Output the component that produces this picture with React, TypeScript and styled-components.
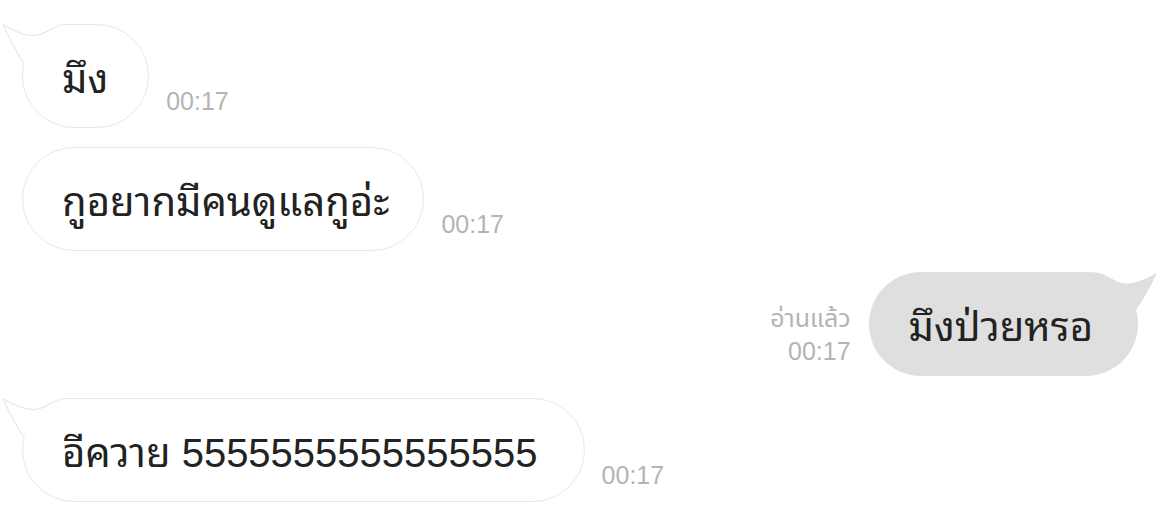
import React from "react";
import styled, { createGlobalStyle } from "styled-components";

const GlobalStyle = createGlobalStyle`
  html, body {
    margin: 0;
    padding: 0;
    background: #ffffff;
  }
  body {
    font-family: "Liberation Sans", "Noto Sans Thai Looped", "Loma", "Waree", "Noto Sans Thai", "Noto Sans", sans-serif;
  }
`;

const Chat = styled.div`
  width: 1170px;
  height: 530px;
  box-sizing: border-box;
  padding: 24px 32px 0 22px;
  display: flex;
  flex-direction: column;
  overflow: hidden;
`;

const Row = styled.div<{ $out?: boolean; $space: number }>`
  display: flex;
  align-items: flex-end;
  justify-content: ${(p) => (p.$out ? "flex-end" : "flex-start")};
  gap: ${(p) => (p.$out ? 18 : 17)}px;
  margin-top: ${(p) => p.$space}px;
`;

const Bubble = styled.div<{ $out?: boolean; $padRight: number }>`
  position: relative;
  box-sizing: border-box;
  height: 104px;
  padding: 0 ${(p) => p.$padRight}px 2px ${(p) => (p.$out ? 40 : 39)}px;
  border-radius: 52px;
  display: flex;
  align-items: center;
  font-family: "Liberation Sans", "Noto Sans Thai Looped", "Loma", "Waree", "Noto Sans Thai", "Noto Sans", sans-serif;
  font-size: 40px;
  color: #222222;
  white-space: nowrap;
  background: ${(p) => (p.$out ? "#dfdfdf" : "#ffffff")};
  border: ${(p) => (p.$out ? "none" : "1px solid #e8e8e8")};
`;

const TailSvg = styled.svg<{ $out?: boolean }>`
  position: absolute;
  top: ${(p) => (p.$out ? "0" : "-1px")};
  ${(p) => (p.$out ? "right: -22px;" : "left: -23px;")}
  transform: ${(p) => (p.$out ? "scaleX(-1)" : "none")};
  overflow: visible;
  pointer-events: none;
`;

const Time = styled.div`
  font-family: "Liberation Sans", "Noto Sans Thai", sans-serif;
  font-size: 25px;
  line-height: 32px;
  color: #b4b4b4;
  margin-bottom: 11px;
  white-space: nowrap;
`;

const Receipt = styled.div`
  display: flex;
  flex-direction: column;
  align-items: flex-end;
  font-family: "Liberation Sans", "Noto Sans Thai", sans-serif;
  font-size: 25px;
  line-height: 33px;
  color: #b4b4b4;
  margin-bottom: 8px;
`;

const Tail: React.FC<{ out?: boolean }> = ({ out }) => {
  const fill = out ? "#dfdfdf" : "#ffffff";
  return (
    <TailSvg $out={out} width={82} height={52} viewBox="0 0 82 52">
      <path
        d="M3 0.5 C15 8 28 13 38 11 C48 9 55 0.5 66 0.5 L82 0.5 L82 8 L34 52 L24 38 Q12 21 3 0.5 Z"
        fill={fill}
      />
      {!out && (
        <>
          <path
            d="M3 0.5 C15 8 28 13 38 11 C48 9 55 0.5 66 0.5 L82 0.5"
            fill="none"
            stroke="#e8e8e8"
            strokeWidth={1.2}
          />
          <path d="M3 0.5 Q12 21 23.6 39" fill="none" stroke="#e8e8e8" strokeWidth={1.2} />
        </>
      )}
    </TailSvg>
  );
};

type Msg = { text: string; out?: boolean; tail?: boolean; space: number; padRight: number };

const messages: Msg[] = [
  { text: "มึง", tail: true, space: 0, padRight: 40 },
  { text: "กูอยากมีคนดูแลกูอ่ะ", space: 19, padRight: 34 },
  { text: "มึงป่วยหรอ", out: true, tail: true, space: 21, padRight: 45 },
  { text: "อีควาย 5555555555555555", tail: true, space: 22, padRight: 46 },
];

export default function App() {
  return (
    <>
      <GlobalStyle />
      <Chat>
        {messages.map((m, i) => (
          <Row key={i} $out={m.out} $space={m.space}>
            {m.out && (
              <Receipt>
                <span>อ่านแล้ว</span>
                <span>00:17</span>
              </Receipt>
            )}
            <Bubble $out={m.out} $padRight={m.padRight}>
              {m.tail && <Tail out={m.out} />}
              {m.text}
            </Bubble>
            {!m.out && <Time>00:17</Time>}
          </Row>
        ))}
      </Chat>
    </>
  );
}
